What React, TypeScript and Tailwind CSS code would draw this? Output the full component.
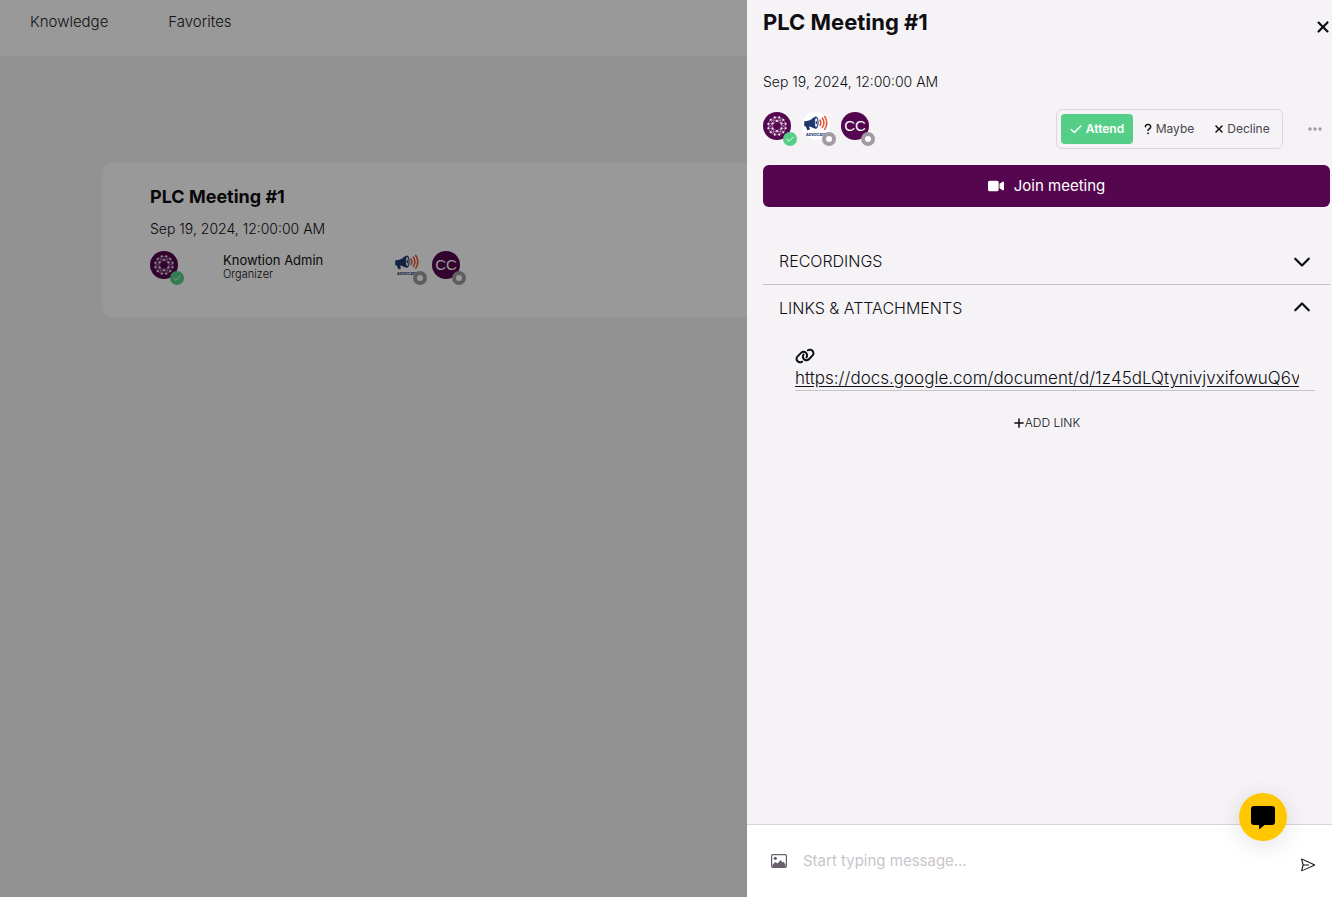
import type { ReactNode } from "react";
import { FaChevronDown, FaChevronUp, FaEllipsis, FaLink, FaPlus, FaQuestion, FaVideo, FaXmark } from "react-icons/fa6";
import { VscSend } from "react-icons/vsc";

const ring = (count: number, radius: number, turn: number): [number, number][] =>
  Array.from({ length: count }, (_, i) => {
    const a = ((i + turn) / count) * Math.PI * 2;
    return [14 + radius * Math.cos(a), 14 + radius * Math.sin(a)];
  });

const outer = ring(12, 9, 0.5);
const inner = ring(6, 5, 0.5);

function CheckMark({ className }: { className: string }) {
  return (
    <svg viewBox="0 0 12 12" className={className} fill="none" stroke="currentColor" strokeWidth="1.4" strokeLinecap="round" strokeLinejoin="round" aria-hidden="true">
      <path d="M1.200 6.500 4.400 9.500 10.800 3" />
    </svg>
  );
}

function NetworkLogo() {
  return (
    <svg viewBox="0 0 28 28" className="size-7" role="img" aria-label="Knowtion Admin">
      <circle cx="14" cy="14" r="14" fill="#54064f" />
      <g fill="none" stroke="#c9a6c8" strokeWidth="0.6">
        <polygon points={outer.map((p) => p.join(",")).join(" ")} />
        <polygon points={inner.map((p) => p.join(",")).join(" ")} />
        {inner.map(([x, y], i) =>
          [0, 1, 2, 3].map((k) => {
            const [ox, oy] = outer[(i * 2 + k + 11) % 12];
            return <line key={`${i}-${k}`} x1={x} y1={y} x2={ox} y2={oy} />;
          }),
        )}
      </g>
      {outer.concat(inner).map(([x, y], i) => (
        <circle key={i} cx={x} cy={y} r="1" fill="#f3e8f3" />
      ))}
    </svg>
  );
}

function AdvocateLogo() {
  return (
    <svg viewBox="0 0 28 28" className="size-7" role="img" aria-label="Advocate">
      <circle cx="14" cy="14" r="14" fill="#fff" />
      <path d="M2.200 9.200c2.800.200 6-.700 9-3.500l2.800-1.300v12.400l-2.800-.700c-1.300-.900-2.700-1.500-4.200-1.700l1 3.200-2.700.600-1.600-4H2.200z" fill="#21386f" />
      <ellipse cx="14" cy="10.600" rx="2.600" ry="6.200" fill="#21386f" />
      <ellipse cx="14.200" cy="10.600" rx="1.300" ry="4.500" fill="#dce6f5" />
      <ellipse cx="14.300" cy="10.600" rx="0.700" ry="1.600" fill="#21386f" />
      <g fill="none" stroke="#e4573a" strokeWidth="1.600" strokeLinecap="round">
        <path d="M18 8.200q1.700 2.600 0 5.200" />
        <path d="M20.400 6.200q3 4.600 0 9.200" />
        <path d="M22.800 4.500q4 6.300 0 12.600" />
      </g>
      <text x="4" y="24" fontSize="3.600" fontWeight="800" fontFamily="Inter, sans-serif" fill="#21386f">ADVOCATE</text>
    </svg>
  );
}

function Avatar({ going = false, children }: { going?: boolean; children: ReactNode }) {
  return (
    <div className="relative size-7 shrink-0">
      {children}
      {going ? (
        <span className="absolute -right-1.5 -bottom-1.5 flex size-3.5 items-center justify-center rounded-full bg-[#55cf87] text-white">
          <CheckMark className="size-2" />
        </span>
      ) : (
        <span className="absolute -right-1.5 -bottom-1.5 flex size-3.5 items-center justify-center rounded-full bg-[#a29aa4]">
          <span className="size-1.5 rounded-full bg-white" />
        </span>
      )}
    </div>
  );
}

function Initials() {
  return (
    <div className="flex size-7 items-center justify-center rounded-full bg-[#54064f] pb-0.5 font-['Liberation_Sans',sans-serif] text-[15px] leading-none text-white">
      CC
    </div>
  );
}

function Backdrop() {
  return (
    <div className="min-h-screen bg-[#f5f3f6]">
      <header className="h-14 bg-white px-[30px] pt-3">
        <nav className="flex gap-[60px] text-[15px] leading-5 font-light text-[#222]">
          <a href="#knowledge">Knowledge</a>
          <a href="#favorites">Favorites</a>
        </nav>
      </header>
      <main className="px-[102px] pt-[106px]">
        <article className="rounded-xl bg-white px-12 pt-5 pb-[38px]">
          <h2 className="text-lg leading-[30px] font-bold">PLC Meeting #1</h2>
          <p className="mt-[7px] text-sm leading-5 font-light">Sep 19, 2024, 12:00:00 AM</p>
          <div className="mt-3 flex">
            <Avatar going>
              <NetworkLogo />
            </Avatar>
            <div className="ml-[45px] w-[170px] pt-0.5">
              <p className="text-[13px] leading-[15px]">Knowtion Admin</p>
              <p className="text-[11px] leading-3 font-light">Organizer</p>
            </div>
            <div className="flex gap-[11px]">
              <Avatar>
                <AdvocateLogo />
              </Avatar>
              <Avatar>
                <Initials />
              </Avatar>
            </div>
          </div>
        </article>
      </main>
    </div>
  );
}

function MeetingPanel() {
  return (
    <aside role="dialog" aria-label="PLC Meeting #1" className="flex h-full w-[585px] max-w-full flex-col bg-[#f5f3f6]">
      <div className="flex-1 overflow-hidden pr-0.5 pl-4">
        <div className="flex justify-between pt-1.5">
          <h1 className="text-[22px] leading-8 font-bold">PLC Meeting #1</h1>
          <button type="button" aria-label="Close" className="-mr-0.5 self-end pb-0.5">
            <FaXmark className="size-[18px]" />
          </button>
        </div>
        <p className="mt-[34px] text-sm leading-5 font-light">Sep 19, 2024, 12:00:00 AM</p>
        <div className="mt-[17px] flex items-start justify-between">
          <div className="mt-[3px] flex gap-[11px]">
            <Avatar going>
              <NetworkLogo />
            </Avatar>
            <Avatar>
              <AdvocateLogo />
            </Avatar>
            <Avatar>
              <Initials />
            </Avatar>
          </div>
          <div className="flex items-center gap-6 pr-[7px]">
            <div className="flex h-10 w-[227px] items-center rounded-md border border-[#dcd6de] p-1 text-xs text-[#4a464c]">
              <button type="button" className="flex h-[30px] w-[72px] items-center justify-center gap-1 rounded bg-[#55cf87] font-semibold text-white">
                <CheckMark className="size-3" />
                Attend
              </button>
              <button type="button" className="flex h-[30px] w-[72px] items-center justify-center gap-1">
                <FaQuestion className="h-3 w-2 text-[#111]" />
                Maybe
              </button>
              <button type="button" className="flex h-[30px] flex-1 items-center justify-center gap-0.5">
                <FaXmark className="size-3 text-[#111]" />
                Decline
              </button>
            </div>
            <button type="button" aria-label="More options">
              <FaEllipsis className="size-4 text-[#a29aa4]" />
            </button>
          </div>
        </div>
        <button type="button" className="mt-4 flex h-[42px] w-full items-center justify-center gap-2.5 rounded-md bg-[#54064f] text-[15px] text-white">
          <FaVideo className="size-4" />
          Join meeting
        </button>
        <section className="mt-[31px] border-b border-[#c5c3c8]">
          <button type="button" aria-expanded="false" className="flex h-[46px] w-full items-center justify-between pr-[19px] pl-4 font-light">
            RECORDINGS
            <FaChevronDown className="size-[18px]" />
          </button>
        </section>
        <section>
          <button type="button" aria-expanded="true" className="flex h-[46px] w-full items-center justify-between pr-[19px] pl-4 font-light">
            LINKS &amp; ATTACHMENTS
            <FaChevronUp className="size-[18px]" />
          </button>
          <div className="mr-[15px] ml-8 border-b border-[#c5c3c8] pt-[15px]">
            <FaLink className="h-5 w-5" />
            <a
              href="https://docs.google.com/document/d/1z45dLQtynivjvxifowuQ6v"
              className="mr-4 block overflow-hidden text-[17px] leading-6 font-light whitespace-nowrap underline underline-offset-2"
            >
              https://docs.google.com/document/d/1z45dLQtynivjvxifowuQ6v
            </a>
          </div>
          <button type="button" className="mx-auto mt-6 flex items-center text-xs font-light">
            <FaPlus className="size-3" />
            ADD LINK
          </button>
        </section>
      </div>
      <form className="flex h-[73px] items-center border-t border-[#d8d3dc] bg-white px-4" onSubmit={(e) => e.preventDefault()}>
        <button type="button" aria-label="Attach image" className="ml-2">
          <svg viewBox="0 0 16 14" className="h-3.5 w-4" aria-hidden="true">
            <rect x="0.600" y="0.600" width="14.800" height="12.800" rx="1.200" fill="none" stroke="#68606b" strokeWidth="1.200" />
            <circle cx="4.300" cy="4.300" r="1.600" fill="#68606b" />
            <path d="M1.500 13v-2.500L4.500 8l2 1.500L9.500 6l2 2.500 1-.700 2 2.700V13z" fill="#68606b" />
          </svg>
        </button>
        <input
          type="text"
          aria-label="Message"
          placeholder="Start typing message…"
          className="mx-4 min-w-0 flex-1 bg-transparent text-[15px] leading-5 outline-none placeholder:text-[#c9c5cb]"
        />
        <button type="submit" aria-label="Send" className="pt-2">
          <VscSend className="size-4" />
        </button>
      </form>
    </aside>
  );
}

export default function App() {
  return (
    <div className="relative font-['Inter',sans-serif] text-[#0f0e11]">
      <Backdrop />
      <div className="fixed inset-0 flex justify-end bg-black/40">
        <MeetingPanel />
      </div>
      <button
        type="button"
        aria-label="Open chat"
        className="fixed right-[45px] bottom-14 flex size-12 items-center justify-center rounded-full bg-[#ffc700] shadow-[0_4px_24px_rgba(0,0,0,0.12)]"
      >
        <svg viewBox="0 0 24 24" className="size-6 text-black" fill="currentColor" aria-hidden="true">
          <path d="M3 1h18a3 3 0 0 1 3 3v13a3 3 0 0 1-3 3h-7.500L8 24.500V20H3a3 3 0 0 1-3-3V4a3 3 0 0 1 3-3z" />
        </svg>
      </button>
    </div>
  );
}
